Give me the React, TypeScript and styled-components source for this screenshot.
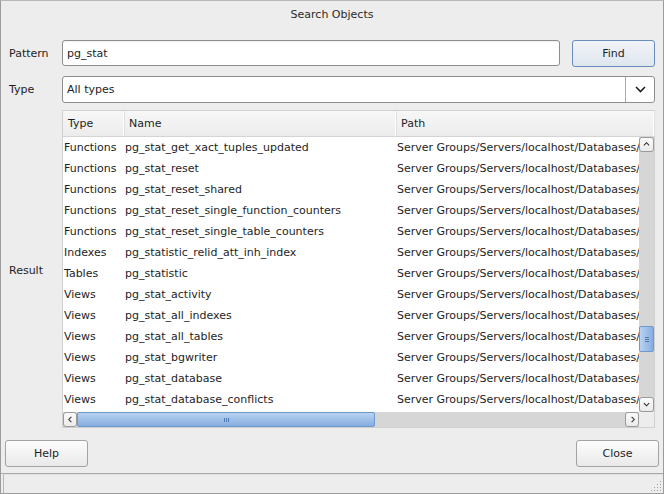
import React from "react";
import styled, { createGlobalStyle } from "styled-components";

const Global = createGlobalStyle`
  html, body {
    margin: 0;
    padding: 0;
    background: #ededed;
  }
  body {
    font-family: "DejaVu Sans", "Liberation Sans", sans-serif;
    font-size: 11px;
    color: #1e1e1e;
  }
`;

const Window = styled.div`
  width: 664px;
  height: 494px;
  box-sizing: border-box;
  border: 1px solid #9c9c9c;
  border-top-color: #b8b8b8;
  background: #ededed;
  display: flex;
  flex-direction: column;
  overflow: hidden;
`;

const TitleBar = styled.div`
  height: 27px;
  display: flex;
  align-items: center;
  justify-content: center;
  font-size: 11px;
  color: #2a2a2a;
`;

const Form = styled.div`
  flex: 1;
  display: grid;
  grid-template-columns: 53px minmax(0, 1fr);
  grid-template-rows: 26px 27px minmax(0, 1fr);
  row-gap: 10px;
  padding: 12px 8px 0 8px;
  min-height: 0;
`;

const Label = styled.div`
  display: flex;
  align-items: center;
  color: #1e1e1e;
`;

const ResultCell = styled.div`
  display: flex;
  flex-direction: column;
  min-height: 0;
  min-width: 0;
  margin-top: -3px;
`;

const PatternRow = styled.div`
  display: flex;
  gap: 12px;
  align-items: stretch;
  min-width: 0;
`;

const TextInput = styled.div`
  flex: 1;
  box-sizing: border-box;
  background: #fff;
  border: 1px solid #8e8e8e;
  border-radius: 3px;
  display: flex;
  align-items: center;
  padding-left: 4px;
  box-shadow: inset 0 1px 1px rgba(0, 0, 0, 0.06);
`;

const Button = styled.div<{ $default?: boolean }>`
  width: 83px;
  height: 27px;
  flex-shrink: 0;
  box-sizing: border-box;
  border-radius: 3px;
  display: flex;
  align-items: center;
  justify-content: center;
  font-size: 11px;
  color: #1e1e1e;
  border: 1px solid ${(p) => (p.$default ? "#6a8cbc" : "#a3a3a3")};
  background: ${(p) =>
    p.$default
      ? "linear-gradient(#f1f4f8, #dfe6ee)"
      : "linear-gradient(#fdfdfd, #e9e9e9)"};
`;

const Combo = styled.div`
  display: flex;
  box-sizing: border-box;
  background: #fff;
  border: 1px solid #8e8e8e;
  border-radius: 3px;
  min-width: 0;
`;

const ComboText = styled.div`
  flex: 1;
  display: flex;
  align-items: center;
  padding-left: 4px;
`;

const ComboButton = styled.div`
  width: 28px;
  border-left: 1px solid #a8a8a8;
  display: flex;
  align-items: center;
  justify-content: center;
`;

const Table = styled.div`
  height: 318px;
  display: flex;
  flex-direction: column;
  background: #fff;
  border: 1px solid #d0d0d0;
  box-sizing: border-box;
  min-width: 0;
`;

const HeaderRow = styled.div`
  height: 25px;
  display: flex;
  flex-shrink: 0;
  background: linear-gradient(#f7f7f7, #ececec);
  border-bottom: 1px solid #d4d4d4;
`;

const HeaderCell = styled.div<{ $w?: number }>`
  ${(p) => (p.$w ? `width: ${p.$w}px; flex-shrink: 0;` : "flex: 1; min-width: 0;")}
  box-sizing: border-box;
  display: flex;
  align-items: center;
  padding-left: 5px;
  border-right: 1px solid #ffffff;
  box-shadow: 1px 0 0 #e0e0e0;
  color: #1e1e1e;
`;

const Middle = styled.div`
  flex: 1;
  display: flex;
  min-height: 0;
  min-width: 0;
`;

const RowsArea = styled.div`
  flex: 1;
  min-width: 0;
  overflow: hidden;
  display: flex;
  flex-direction: column;
`;

const Row = styled.div`
  height: 21px;
  display: flex;
  align-items: center;
  white-space: nowrap;
  flex-shrink: 0;
`;

const Cell = styled.div<{ $w?: number }>`
  ${(p) => (p.$w ? `width: ${p.$w}px; flex-shrink: 0;` : "flex: 1; min-width: 0;")}
  box-sizing: border-box;
  padding-left: 1px;
  overflow: hidden;
  white-space: nowrap;
`;

const VScroll = styled.div`
  width: 15px;
  flex-shrink: 0;
  display: flex;
  flex-direction: column;
  background: #d6d6d6;
`;

const Track = styled.div<{ $horizontal?: boolean }>`
  flex: 1;
  display: flex;
  flex-direction: ${(p) => (p.$horizontal ? "row" : "column")};
  background: #d6d6d6;
`;

const Arrow = styled.div<{ $horizontal?: boolean }>`
  ${(p) => (p.$horizontal ? "width: 14px;" : "height: 15px;")}
  flex-shrink: 0;
  box-sizing: border-box;
  border: 1px solid #9a9a9a;
  border-radius: 3px;
  background: linear-gradient(#fbfbfb, #ebebeb);
  display: flex;
  align-items: center;
  justify-content: center;
`;

const Thumb = styled.div<{ $horizontal?: boolean }>`
  box-sizing: border-box;
  border: 1px solid #6f98cc;
  border-radius: 2px;
  background: ${(p) =>
    p.$horizontal
      ? "linear-gradient(#b9d2f0, #86ade0)"
      : "linear-gradient(90deg, #b9d2f0, #86ade0)"};
  display: flex;
  align-items: center;
  justify-content: center;
  flex-shrink: 0;
`;

const Bottom = styled.div`
  height: 15px;
  flex-shrink: 0;
  display: flex;
`;

const HScroll = styled.div`
  flex: 1;
  display: flex;
  background: #d6d6d6;
`;

const Corner = styled.div`
  width: 15px;
  background: #ededed;
`;

const Footer = styled.div`
  display: flex;
  justify-content: space-between;
  padding: 12px 4px 0 4px;
  height: 27px;
`;

const StatusBar = styled.div`
  margin-top: 6px;
  height: 20px;
  border-top: 1px solid #a9a9a9;
  box-sizing: border-box;
  display: flex;
  padding-left: 2px;
`;

const StatusPanel = styled.div`
  flex: 1;
  border-left: 1px solid #b9b9b9;
  border-top: 1px solid #e0e0e0;
  position: relative;
`;

const Grip = styled.svg`
  position: absolute;
  right: 1px;
  bottom: 1px;
`;

const TYPE_W = 61;
const NAME_W = 272;
const PATH =
  "Server Groups/Servers/localhost/Databases/postgres/Catalogs/PostgreSQL Catalog (pg_catalog)";

const rows: [string, string][] = [
  ["Functions", "pg_stat_get_xact_tuples_updated"],
  ["Functions", "pg_stat_reset"],
  ["Functions", "pg_stat_reset_shared"],
  ["Functions", "pg_stat_reset_single_function_counters"],
  ["Functions", "pg_stat_reset_single_table_counters"],
  ["Indexes", "pg_statistic_relid_att_inh_index"],
  ["Tables", "pg_statistic"],
  ["Views", "pg_stat_activity"],
  ["Views", "pg_stat_all_indexes"],
  ["Views", "pg_stat_all_tables"],
  ["Views", "pg_stat_bgwriter"],
  ["Views", "pg_stat_database"],
  ["Views", "pg_stat_database_conflicts"],
];

const Chevron = ({ dir }: { dir: "up" | "down" | "left" | "right" }) => {
  const pts: Record<string, string> = {
    up: "1,5 4,2 7,5",
    down: "1,2.5 4,5.5 7,2.5",
    left: "5,1 2,4 5,7",
    right: "3,1 6,4 3,7",
  };
  return (
    <svg width="7" height="7" viewBox="0 0 8 8">
      <polyline points={pts[dir]} fill="none" stroke="#2a2a2a" strokeWidth="1.2" />
    </svg>
  );
};

const GripLines = ({ horizontal }: { horizontal?: boolean }) =>
  horizontal ? (
    <svg width="7" height="6" viewBox="0 0 7 6">
      <path d="M1.5 1v4M3.5 1v4M5.5 1v4" stroke="#4f79b0" strokeWidth="1" />
    </svg>
  ) : (
    <svg width="6" height="7" viewBox="0 0 6 7">
      <path d="M1 1.5h4M1 3.5h4M1 5.5h4" stroke="#4f79b0" strokeWidth="1" />
    </svg>
  );

export default function App() {
  const vScrollOffset = 174;
  const hThumbWidth = 298;
  return (
    <>
      <Global />
      <Window>
        <TitleBar>Search Objects</TitleBar>
        <Form>
          <Label>Pattern</Label>
          <PatternRow>
            <TextInput>pg_stat</TextInput>
            <Button $default>Find</Button>
          </PatternRow>
          <Label>Type</Label>
          <Combo>
            <ComboText>All types</ComboText>
            <ComboButton>
              <svg width="11" height="7" viewBox="0 0 11 7">
                <polyline points="1,1 5.5,5.5 10,1" fill="none" stroke="#1e1e1e" strokeWidth="1.6" />
              </svg>
            </ComboButton>
          </Combo>
          <Label>Result</Label>
          <ResultCell>
            <Table>
              <HeaderRow>
                <HeaderCell $w={TYPE_W}>Type</HeaderCell>
                <HeaderCell $w={NAME_W}>Name</HeaderCell>
                <HeaderCell>Path</HeaderCell>
              </HeaderRow>
              <Middle>
                <RowsArea>
                  {rows.map(([type, name]) => (
                    <Row key={name}>
                      <Cell $w={TYPE_W}>{type}</Cell>
                      <Cell $w={NAME_W}>{name}</Cell>
                      <Cell>{PATH}</Cell>
                    </Row>
                  ))}
                </RowsArea>
                <VScroll>
                  <Arrow>
                    <Chevron dir="up" />
                  </Arrow>
                  <Track>
                    <Thumb style={{ marginTop: vScrollOffset, height: 26 }}>
                      <GripLines />
                    </Thumb>
                  </Track>
                  <Arrow>
                    <Chevron dir="down" />
                  </Arrow>
                </VScroll>
              </Middle>
              <Bottom>
                <HScroll>
                  <Arrow $horizontal>
                    <Chevron dir="left" />
                  </Arrow>
                  <Track $horizontal>
                    <Thumb $horizontal style={{ width: hThumbWidth }}>
                      <GripLines horizontal />
                    </Thumb>
                  </Track>
                  <Arrow $horizontal>
                    <Chevron dir="right" />
                  </Arrow>
                </HScroll>
                <Corner />
              </Bottom>
            </Table>
          </ResultCell>
        </Form>
        <Footer>
          <Button>Help</Button>
          <Button>Close</Button>
        </Footer>
        <StatusBar>
          <StatusPanel>
            <Grip width="11" height="11" viewBox="0 0 11 11">
              {[
                [9, 1], [9, 4], [9, 7], [9, 10], [6, 4], [6, 7], [6, 10], [3, 7], [3, 10], [0, 10],
              ].map(([x, y]) => (
                <rect key={`${x}-${y}`} x={x} y={y - 1} width="1" height="1" fill="#a0a0a0" />
              ))}
            </Grip>
          </StatusPanel>
        </StatusBar>
      </Window>
    </>
  );
}
